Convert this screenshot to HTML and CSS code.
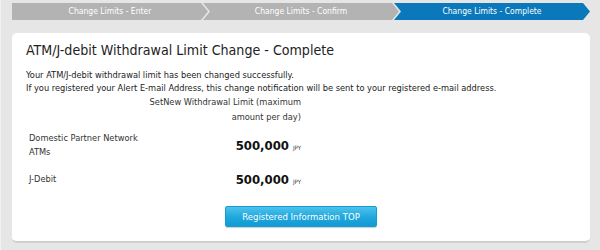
FILE: index.html
```html
<!DOCTYPE html>
<html>
<head>
<meta charset="utf-8">
<link rel="stylesheet" href="styles.css">
</head>
<body>
<div class="frame">
  <div class="steps">
    <div class="step first">Change Limits - Enter</div>
    <div class="step">Change Limits - Confirm</div>
    <div class="step current">Change Limits - Complete</div>
  </div>
  <div class="card">
    <h1 class="title">ATM/J-debit Withdrawal Limit Change - Complete</h1>
    <p class="msg">Your ATM/J-debit withdrawal limit has been changed successfully.<br>If you registered your Alert E-mail Address, this change notification will be sent to your registered e-mail address.</p>
    <table class="limits">
      <tr class="head">
        <th class="label-col"></th>
        <th class="value-col">SetNew Withdrawal Limit (maximum amount per day)</th>
      </tr>
      <tr class="row first-row">
        <td class="label">Domestic Partner Network ATMs</td>
        <td class="value"><span class="amount">500,000</span><span class="unit">JPY</span></td>
      </tr>
      <tr class="row second-row">
        <td class="label">J-Debit</td>
        <td class="value"><span class="amount">500,000</span><span class="unit">JPY</span></td>
      </tr>
    </table>
    <div class="actions">
      <button class="btn">Registered Information TOP</button>
    </div>
  </div>
</div>
</body>
</html>
```

FILE: styles.css
```css
html, body {
  margin: 0;
  padding: 0;
}
body {
  width: 600px;
  height: 250px;
  background: #e6e6e6;
  font-family: "DejaVu Sans Condensed", "DejaVu Sans", sans-serif;
  overflow: hidden;
}
.frame {
  box-sizing: border-box;
  height: 250px;
  padding: 3px 10px 0 11px;
  border-left: 1px solid #f2f2f2;
}
.steps {
  display: flex;
  height: 17px;
}
.step {
  flex: 1;
  background: #b3b3b3;
  color: #fff;
  font-size: 8.5px;
  line-height: 17px;
  text-align: center;
  margin-left: -5px;
  clip-path: polygon(0 0, calc(100% - 7px) 0, 100% 50%, calc(100% - 7px) 100%, 0 100%, 7px 50%);
}
.step.first {
  margin-left: 0;
  clip-path: polygon(0 0, calc(100% - 7px) 0, 100% 50%, calc(100% - 7px) 100%, 0 100%);
}
.step.current {
  background: #0a78ba;
}
.card {
  margin-top: 13px;
  height: 210px;
  box-sizing: border-box;
  background: #fff;
  border-radius: 5px;
  border-bottom: 2px solid #cfcfcf;
  padding: 7px 14px 0 14px;
}
.title {
  margin: 0;
  font-size: 14.1px;
  font-weight: normal;
  color: #222;
  line-height: 20px;
}
.msg {
  margin: 8px 0 0 0;
  font-size: 9.2px;
  line-height: 13px;
  color: #222;
}
.limits {
  border-collapse: collapse;
  width: 275px;
  margin-top: 0;
  color: #333;
}
.limits th {
  font-weight: normal;
  font-size: 9.2px;
  line-height: 15px;
  padding: 0;
}
.label-col {
  width: 112px;
}
.value-col {
  text-align: right;
}
.row td {
  vertical-align: middle;
  padding: 0;
}
.first-row td {
  height: 37px;
  padding-top: 2px;
}
.second-row td {
  height: 31px;
}
.label {
  font-size: 9.2px;
  line-height: 14px;
  padding-left: 3px !important;
}
.value {
  text-align: right;
}
.amount {
  font-size: 13px;
  font-weight: bold;
  color: #111;
}
.unit {
  font-size: 6px;
  margin-left: 4px;
  color: #333;
}
.actions {
  display: flex;
  justify-content: center;
  margin-top: 12px;
}
.btn {
  width: 152px;
  height: 21px;
  border: 1px solid #1a9bd0;
  border-radius: 2px;
  background: linear-gradient(#4cc3ec, #1fa6dc 55%, #119bd4);
  color: #fff;
  font-family: inherit;
  font-size: 9.5px;
  padding: 0;
  box-shadow: 0 1px 1px rgba(0,0,0,0.2);
}
```
